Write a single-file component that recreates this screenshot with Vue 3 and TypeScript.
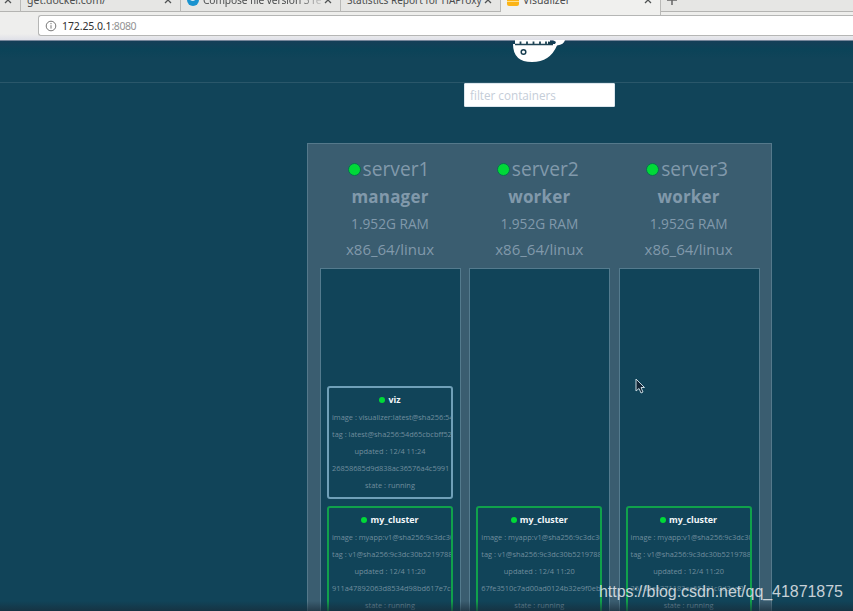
<script setup lang="ts">
interface Task {
  name: string
  kind: 'viz' | 'cluster'
  lines: { text: string; centered?: boolean }[]
}
interface Server {
  name: string
  role: string
  tasks: Task[]
}

const cluster = (id: string): Task => ({
  name: 'my_cluster',
  kind: 'cluster',
  lines: [
    { text: 'image : myapp:v1@sha256:9c3dc30b5219788b' },
    { text: 'tag : v1@sha256:9c3dc30b5219788b2b4a' },
    { text: 'updated : 12/4 11:20', centered: true },
    { text: id },
    { text: 'state : running', centered: true },
  ],
})

const servers: Server[] = [
  {
    name: 'server1',
    role: 'manager',
    tasks: [
      {
        name: 'viz',
        kind: 'viz',
        lines: [
          { text: 'image : visualizer:latest@sha256:54d65cbcbff5' },
          { text: 'tag : latest@sha256:54d65cbcbff52ee7' },
          { text: 'updated : 12/4 11:24', centered: true },
          { text: '26858685d9d838ac36576a4c5991' },
          { text: 'state : running', centered: true },
        ],
      },
      cluster('911a47892063d8534d98bd617e7c'),
    ],
  },
  { name: 'server2', role: 'worker', tasks: [cluster('67fe3510c7ad00ad0124b32e9f0eb')] },
  { name: 'server3', role: 'worker', tasks: [cluster('36185ea371183ac65331c0d3ad0')] },
]
</script>

<template>
  <div class="window">
    <div class="tabs">
      <div class="tab first"><svg class="close" viewBox="0 0 8 8"><path d="M1 1l6 6M7 1L1 7" /></svg></div>
      <div class="tab"><span class="label docker">get.docker.com/</span><svg class="close" viewBox="0 0 8 8"><path d="M1 1l6 6M7 1L1 7" /></svg></div>
      <div class="tab">
        <svg class="fav" viewBox="0 0 12 12"><circle cx="6" cy="6" r="6" fill="#1a93cf" /><path d="M2 5Q7 10 10 3L9 0H3z" fill="#d9edf6" /></svg>
        <span class="label compose">Compose file version 3 re</span><svg class="close" viewBox="0 0 8 8"><path d="M1 1l6 6M7 1L1 7" /></svg>
      </div>
      <div class="tab"><span class="label stats">Statistics Report for HAProxy</span><svg class="close" viewBox="0 0 8 8"><path d="M1 1l6 6M7 1L1 7" /></svg></div>
      <div class="tab active">
        <svg class="fav" viewBox="0 0 12 12"><rect width="12" height="12" rx="2" fill="#fbb417" /><path d="M0 7.500h12" stroke="#ffe08a" /></svg>
        <span class="label vis">Visualizer</span><svg class="close" viewBox="0 0 8 8"><path d="M1 1l6 6M7 1L1 7" /></svg>
      </div>
      <div class="tab plus"><svg class="add" viewBox="0 0 10 10"><path d="M5 0v10M0 5h10" /></svg></div>
    </div>
    <div class="toolbar">
      <div class="address">
        <svg class="info" viewBox="0 0 12 12"><circle cx="6" cy="6" r="4.800" /><path d="M6 5.200v3.400M6 3v1.200" /></svg>
        <span class="host">172.25.0.1</span><span class="port">:8080</span>
      </div>
    </div>

    <div class="page">
      <header>
        <svg class="whale" viewBox="0 0 56 23">
          <path d="M6 0H41V4H46L47 2L44 0H56Q55 4.500 48 5.500Q41 22 23 22Q4 22 4 4H6Z" fill="#fff" />
          <path d="M6 4.500H44" stroke="#204556" stroke-width="1.300" />
          <path d="M11.500 1.500V4.500M18 1.500V4.500M24.500 1.500V4.500M31 1.500V4.500M37 1.500V4.500" stroke="#204556" stroke-width="1.800" />
          <path d="M39 1.500L43 2V4.500H39Z" fill="#183e50" />
          <circle cx="14.500" cy="12" r="2.300" fill="#fff" stroke="#183e50" stroke-width="1.500" />
        </svg>
      </header>
      <div class="search"><input placeholder="filter containers" /></div>
      <main>
        <section v-for="server in servers" :key="server.name" class="server">
          <div class="meta">
            <div class="name"><i class="dot"></i><span>{{ server.name }}</span></div>
            <div class="role">{{ server.role }}</div>
            <div class="ram">1.952G RAM</div>
            <div class="arch">x86_64/linux</div>
          </div>
          <div class="tasks" :class="server.role">
            <article v-for="task in server.tasks" :key="task.name" class="task" :class="task.kind">
              <div class="title"><i class="dot"></i><span>{{ task.name }}</span></div>
              <div v-for="line in task.lines" :key="line.text" class="line" :class="{ centered: line.centered }">{{ line.text }}</div>
            </article>
          </div>
        </section>
      </main>
    </div>

    <svg class="cursor" viewBox="0 0 10 16"><path d="M1 1V13L4 10.500L6 15L8 14L6 9.500H9.500Z" fill="#132636" stroke="#c4d6de" stroke-width="1" /></svg>
    <div class="shade"></div>
    <div class="watermark">https://blog.csdn.net/qq_41871875</div>
  </div>
</template>

<style>
body { margin: 0; overflow: hidden; background: #114459; }
</style>

<style scoped>
* { box-sizing: border-box; }
.window { position: relative; display: flex; flex-direction: column; width: 853px; height: 611px; overflow: hidden; background: #114459; font-family: "Open Sans", sans-serif; }
.tabs { display: flex; flex: none; height: 15px; background: #eeeeec; color: #4b4d4e; font-family: "Noto Sans", sans-serif; font-size: 10.5px; }
.tab { display: flex; flex: none; width: 160px; height: 12px; padding: 0 8px 0 6px; border-right: 1px solid #b9b9b7; border-bottom: 1px solid #b4b4b2; background: #e6e6e4; }
.tab.first { width: 21px; padding: 0 8px 0 0; }
.tab.active { height: 15px; border-bottom: 0; background: #f0f0ee; }
.tab.plus { flex: 1; border-right: 0; }
.label { height: 14px; margin-top: -7px; line-height: 14px; white-space: nowrap; }
.compose { width: 121px; overflow: hidden; font-size: 10.200px; letter-spacing: -.1px; mask-image: linear-gradient(90deg, #000 78%, transparent 102%); }
.stats { font-size: 10.100px; letter-spacing: -.05px; }
.fav { flex: none; width: 12px; height: 12px; margin: -6px 4px 0 0; }
.close { flex: none; width: 8px; height: 8px; margin: -4px 0 0 auto; fill: none; stroke: #505354; stroke-width: 1.300; }
.add { width: 10px; height: 10px; margin-top: -5px; stroke: #666; stroke-width: 1.500; }
.toolbar { flex: none; height: 26px; padding-left: 38px; border-bottom: 1px solid #76869a; background: linear-gradient(#eeeeed 75%, #dfe0e8); }
.address { display: flex; align-items: center; height: 21px; padding-left: 6px; border: 1px solid #b5b6b5; border-right: 0; border-radius: 3px 0 0 3px; background: #fff; font-family: "Noto Sans", sans-serif; font-size: 10.500px; color: #303030; }
.info { width: 12px; height: 12px; margin-right: 5px; fill: none; stroke: #777; }
.host { letter-spacing: -.1px; }
.port { color: #929292; letter-spacing: -.45px; }
.page { display: flex; flex: 1; flex-direction: column; min-height: 0; background: linear-gradient(#153e57, #0b4358 8px, #114459 18px); }
header { flex: none; display: flex; height: 42px; padding-left: 509px; border-bottom: 1px solid #2a576a; }
.whale { width: 56px; height: 23px; margin-top: -1px; }
.search { flex: none; padding: 0 0 36px 464px; height: 60px; }
input { display: block; width: 151px; height: 24px; padding: 1px 5px; border: 1px solid #dce6ed; border-radius: 1px; background: #fff; font: 11.700px "Open Sans", sans-serif; }
input::placeholder { color: #c5cdd8; opacity: 1; }
main { display: flex; flex: none; gap: 8.300px; width: 465px; height: 500px; margin-left: 307px; padding: 0 12px; border: 1px solid #55798b; background: #3a5d70; color: #8199ab; }
.server { width: 141px; flex: none; }
.meta { display: flex; flex-direction: column; height: 124px; margin-left: -1px; padding-top: 10px; text-align: center; white-space: nowrap; }
.name { display: flex; align-items: center; justify-content: center; height: 29px; font-size: 19.200px; }
.name .dot { width: 13px; height: 13px; margin: 2px 2px 0 -3px; border: 1px solid #087150; }
.dot { flex: none; border-radius: 50%; background: #00d938; }
.role { height: 26px; line-height: 27px; font-size: 17px; font-weight: 700; letter-spacing: .2px; }
.ram { height: 28px; line-height: 29px; font-size: 13.700px; }
.arch { height: 26px; line-height: 24px; font-size: 15px; }
.tasks { display: flex; flex-direction: column; gap: 7px; width: 141px; height: 400px; padding: 117px 7px 0 6px; border: 1px solid #547b8e; background: #114459; }
.tasks.worker { padding-top: 237px; }
.task { flex: none; width: 126px; height: 113px; padding: 3px 0 0 3px; overflow: hidden; border: 2px solid #70a0b8; border-radius: 3px; color: #708d9d; font-size: 7.400px; }
.task.cluster { border-color: #10a14b; }
.title { display: flex; align-items: center; justify-content: center; height: 17px; margin-left: -3px; color: #f3f7f9; font-size: 8.900px; font-weight: 700; }
.title .dot { width: 6px; height: 6px; margin-right: 3px; }
.line { height: 17.100px; line-height: 19px; white-space: nowrap; }
.line.centered { margin-left: -3px; text-align: center; }
.cursor { position: absolute; left: 635px; top: 378px; width: 10px; height: 16px; }
.shade { position: absolute; right: 0; bottom: 0; left: 0; height: 10px; background: linear-gradient(transparent, rgba(25, 42, 55, .65)); }
.watermark { position: absolute; left: 599px; top: 582px; color: rgba(225, 230, 234, .88); font: 16px/20px "Liberation Sans", sans-serif; letter-spacing: -.05px; white-space: nowrap; }
</style>
